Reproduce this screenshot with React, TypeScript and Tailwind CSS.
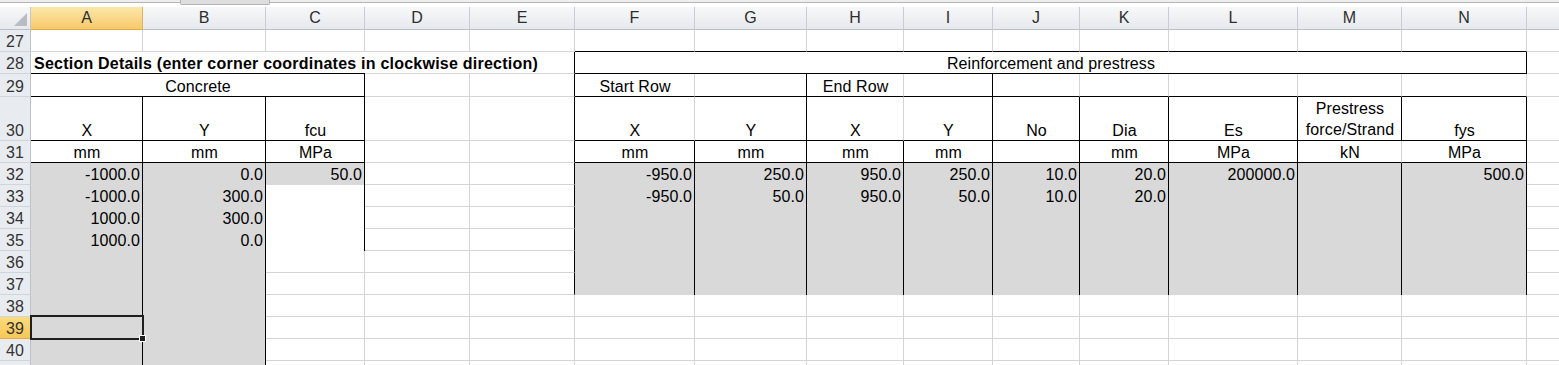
import clsx from "clsx";

type Line = "k" | "g" | "n";

interface Cell {
  t?: string;
  span?: 3 | 9;
  al?: "l" | "c" | "r";
  bold?: boolean;
  fill?: "gray" | "white";
  r?: Line;
  b?: Line;
  over?: boolean;
  lines?: string[];
}

const rightLine: Record<Line, string> = {
  k: "border-r border-r-black",
  g: "border-r border-r-[#d4d4d4]",
  n: "",
};
const bottomLine: Record<Line, string> = {
  k: "border-b border-b-black",
  g: "border-b border-b-[#d4d4d4]",
  n: "pb-px",
};

const hd = (t: string): Cell => ({ t, r: "k", b: "k" });
const g = (t?: string): Cell => ({ t, fill: "gray", r: "k", b: "n", al: "r" });
const wht: Cell = { fill: "white", r: "k", b: "n" };
const blank = (n: number): Cell[] => Array.from({ length: n }, () => ({}));
const grays = (n: number): Cell[] => Array.from({ length: n }, () => g());

// O is off the right edge, its label is never seen
const COLS = ["A", "B", "C", "D", "E", "F", "G", "H", "I", "J", "K", "L", "M", "N", ""];

const rows: [number, Cell[]][] = [
  [27, [...blank(5), ...Array.from({ length: 9 }, (): Cell => ({ b: "k" })), {}]],
  [
    28,
    [
      {
        t: "Section Details (enter corner coordinates in clockwise direction)",
        al: "l",
        bold: true,
        over: true,
        r: "n",
        b: "k",
      },
      { r: "n", b: "k" },
      { r: "n", b: "k" },
      { r: "n" },
      { r: "k" },
      { t: "Reinforcement and prestress", span: 9, r: "k", b: "k" },
      {},
    ],
  ],
  [
    29,
    [
      { t: "Concrete", span: 3, r: "k", b: "k" },
      {},
      { r: "k" },
      { t: "Start Row", b: "k" },
      { r: "k", b: "k" },
      { t: "End Row", b: "k" },
      { r: "k", b: "k" },
      { b: "k" },
      { b: "k" },
      { b: "k" },
      { b: "k" },
      { b: "k" },
      {},
    ],
  ],
  [
    30,
    [
      hd("X"),
      hd("Y"),
      hd("fcu"),
      {},
      { r: "k" },
      { t: "X", b: "k" },
      hd("Y"),
      { t: "X", b: "k" },
      hd("Y"),
      hd("No"),
      hd("Dia"),
      hd("Es"),
      { lines: ["Prestress", "force/Strand"], r: "k", b: "k" },
      hd("fys"),
      {},
    ],
  ],
  [
    31,
    [
      hd("mm"),
      hd("mm"),
      hd("MPa"),
      {},
      { r: "k" },
      hd("mm"),
      hd("mm"),
      hd("mm"),
      hd("mm"),
      hd(""),
      hd("mm"),
      hd("MPa"),
      { t: "kN", b: "k" },
      hd("MPa"),
      {},
    ],
  ],
  [
    32,
    [
      g("-1000.0"),
      g("0.0"),
      g("50.0"),
      {},
      { r: "k" },
      g("-950.0"),
      g("250.0"),
      g("950.0"),
      g("250.0"),
      g("10.0"),
      g("20.0"),
      g("200000.0"),
      g(),
      g("500.0"),
      {},
    ],
  ],
  [
    33,
    [
      g("-1000.0"),
      g("300.0"),
      wht,
      {},
      { r: "k" },
      g("-950.0"),
      g("50.0"),
      g("950.0"),
      g("50.0"),
      g("10.0"),
      g("20.0"),
      g(),
      g(),
      g(),
      {},
    ],
  ],
  [34, [g("1000.0"), g("300.0"), wht, {}, { r: "k" }, ...grays(9), {}]],
  [35, [g("1000.0"), g("0.0"), wht, {}, { r: "k" }, ...grays(9), {}]],
  [36, [g(), g(), {}, {}, { r: "k" }, ...grays(9), {}]],
  [37, [g(), g(), {}, {}, { r: "k" }, ...grays(9), {}]],
  [38, [g(), g(), ...blank(13)]],
  [39, [g(), g(), ...blank(13)]],
  [40, [g(), g(), ...blank(13)]],
  [41, [g(), g(), ...blank(13)]],
];

function SheetCell({ c }: { c: Cell }) {
  const { r = "g", b = "g", al = "c" } = c;
  return (
    <div
      className={clsx(
        "flex items-end min-w-0 pl-[3px] leading-[18px] whitespace-nowrap text-black",
        r === "n" ? "pr-[3px]" : "pr-[2px]",
        rightLine[r],
        bottomLine[b],
        al === "l" && "justify-start",
        al === "c" && "justify-center",
        al === "r" && "justify-end",
        c.fill === "gray" && "bg-[#d9d9d9]",
        c.fill === "white" && "bg-white",
        c.span === 3 && "col-span-3",
        c.span === 9 && "col-span-9",
        c.bold ? "font-bold tracking-[0.23px]" : "tracking-[0.1px]",
        c.over ? "overflow-visible relative z-10" : "overflow-hidden"
      )}
    >
      {c.lines ? (
        <span className="text-center leading-[21px]">
          {c.lines[0]}
          <br />
          {c.lines[1]}
        </span>
      ) : (
        c.t
      )}
    </div>
  );
}

export default function App() {
  return (
    <div className="w-screen h-screen overflow-hidden bg-white font-['Liberation_Sans',Arial,sans-serif] text-[16px]">
      <div className="relative w-[1627px]">
        {/* ribbon edge */}
        <div className="h-[7px] flex items-start bg-white">
          <div className="w-[180px] h-[3px] bg-[#eeeeee] border-b border-b-[#b4b4b4]" />
          <div className="w-[90px] h-[5px] bg-[#dedede] border border-t-0 border-[#b4b4b4] rounded-b-[2px]" />
          <div className="flex-1 h-[3px] bg-[#eeeeee] border-b border-b-[#b4b4b4]" />
        </div>

        <div className="grid grid-cols-[31px_112px_123px_99px_105px_105px_120px_112px_97px_89px_87px_89px_129px_104px_125px_100px] grid-rows-[23px_22px_22px_23px_44px_22px_22px_22px_22px_22px_22px_22px_22px_22px_22px_22px]">
          {/* column headers */}
          <div className="relative bg-linear-to-b from-[#f7f8fa] to-[#e6e9ed] border-r border-r-[#c3c8ce] border-b border-b-[#b9bec4]">
            <svg className="absolute right-[3px] bottom-[3px]" width="13" height="13" viewBox="0 0 13 13">
              <path d="M13 0 L13 13 L0 13 Z" fill="#b8bdc3" />
            </svg>
          </div>
          {COLS.map((col, i) => (
            <div
              key={i}
              className={clsx(
                "flex items-center justify-center leading-[18px] text-[#2e2e2e] border-r border-b",
                col === "A"
                  ? "bg-linear-to-b from-[#fce7a8] to-[#f6c96a] border-r-[#e1b25a] border-b-[#e2aa45]"
                  : "bg-linear-to-b from-[#f7f8fa] to-[#e6e9ed] border-r-[#c9cdd3] border-b-[#b9bec4]"
              )}
            >
              {col}
            </div>
          ))}

          {rows.map(([n, cells]) => (
            <div key={n} className="contents">
              <div
                className={clsx(
                  "flex items-end justify-center leading-[18px] text-[#333333] border-r border-b",
                  n === 39
                    ? "bg-linear-to-b from-[#fbdc7c] to-[#f6c758] border-r-[#e1b25a] border-b-[#e2aa45]"
                    : "bg-[#e8ecf1] border-r-[#bcc2ca] border-b-[#cfd5dc]"
                )}
              >
                {n < 41 ? n : ""}
              </div>
              {cells.map((c, i) => (
                <SheetCell key={i} c={c} />
              ))}
            </div>
          ))}
        </div>

        {/* active cell A39 */}
        <div className="absolute left-[30px] top-[315px] w-[114px] h-[25px] border-2 border-[#1f1f1f] z-20" />
        <div className="absolute left-[139px] top-[335px] w-[7px] h-[7px] bg-[#1f1f1f] border border-white z-30" />
      </div>
    </div>
  );
}
